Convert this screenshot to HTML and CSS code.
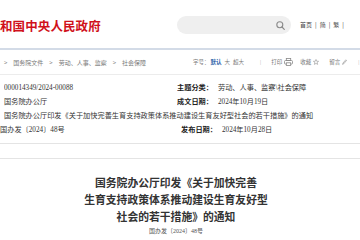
FILE: index.html
```html
<!DOCTYPE html>
<html lang="zh">
<head>
  <meta charset="UTF-8" />
  <meta name="viewport" content="width=device-width, initial-scale=1" />
  <title>国务院办公厅印发《关于加快完善生育支持政策体系推动建设生育友好型社会的若干措施》的通知</title>
  <link rel="stylesheet" href="styles.css">
</head>
<body>
  <header class="top">
    <div class="brand">和国中央人民政府</div>
    <div class="search"><svg class="ico-search" width="9" height="9" viewBox="0 0 9 9"><circle cx="3.8" cy="3.8" r="3" fill="none" stroke="#8a8a8a" stroke-width="1.1"/><path d="M6 6 L8.3 8.3" stroke="#8a8a8a" stroke-width="1.2" stroke-linecap="round"/></svg></div>
    <nav class="lang">首页<span class="sep">|</span>简<span class="sep">|</span>繁<span class="sep">|</span></nav>
  </header>

  <div class="toolbar">
    <div class="crumbs"><span class="arr">&gt;</span>国务院文件<span class="arr">&gt;</span>劳动、人事、监察<span class="arr">&gt;</span>社会保障</div>
    <div class="tools">字号：<b class="on">默认</b><span class="t">大</span><span class="t">超大</span><span class="bar">|</span>打印<svg class="ico" width="9" height="8" viewBox="0 0 9 8"><rect x="2.3" y="0.5" width="4.4" height="2" fill="none" stroke="#888" stroke-width="0.8"/><rect x="0.5" y="2.5" width="8" height="3.6" rx="1" fill="none" stroke="#888" stroke-width="0.8"/><rect x="2.3" y="4.8" width="4.4" height="2.7" fill="#fff" stroke="#888" stroke-width="0.8"/></svg><span class="gap">收藏</span><svg class="ico" width="6" height="6" viewBox="0 0 10 10"><path d="M5 0.8 L6.2 3.7 L9.3 3.9 L6.9 5.9 L7.7 9 L5 7.3 L2.3 9 L3.1 5.9 L0.7 3.9 L3.8 3.7 Z" fill="none" stroke="#888" stroke-width="0.9" stroke-linejoin="round"/></svg><span class="gap wide">留言</span><svg class="ico" width="5" height="6" viewBox="0 0 5 6"><path d="M0.6 5.4 L1 4 L3.8 0.8 L4.5 1.5 L1.7 4.8 Z" fill="none" stroke="#888" stroke-width="0.6"/></svg><span class="bar end">|</span></div>
  </div>

  <div class="info">
    <div class="cell">000014349/2024-00088</div>
    <div class="cell"><b>主题分类：</b><span class="val">劳动、人事、监察\社会保障</span></div>
    <div class="cell">国务院办公厅</div>
    <div class="cell"><b>成文日期：</b><span class="val">2024年10月19日</span></div>
    <div class="cell wide">国务院办公厅印发《关于加快完善生育支持政策体系推动建设生育友好型社会的若干措施》的通知</div>
    <div class="cell">国办发〔2024〕48号</div>
    <div class="cell"><b>发布日期：</b><span class="val">2024年10月28日</span></div>
  </div>

  <div class="divider"></div>

  <article class="doc">
    <h1>国务院办公厅印发《关于加快完善<br>生育支持政策体系推动建设生育友好型<br>社会的若干措施》的通知</h1>
    <p class="docno">国办发〔2024〕48号</p>
  </article>
</body>
</html>
```

FILE: styles.css
```css
:root {
  --red: #d0111b;
  --text: #333333;
  --line: #e4e4e4;
  --blue: #2b5ea7;
}
body {
  margin: 0;
  width: 360px;
  overflow: hidden;
  background: #ffffff;
  color: var(--text);
  font-family: "Liberation Serif", "Noto Sans CJK SC", serif;
}
.top {
  display: grid;
  grid-template-columns: 177px 114px 1fr;
  align-items: center;
  height: 48px;
  border-bottom: 2px solid #d3dbe7;
}
.brand {
  margin-top: 2px;
  color: var(--red);
  font-family: "Noto Sans CJK SC", sans-serif;
  font-weight: 700;
  font-size: 12.5px;
  letter-spacing: 0.1px;
}
.search {
  height: 18px;
  margin-top: 1px;
  border-radius: 9px;
  background: #efefef;
  text-align: right;
  padding-right: 6px;
  box-sizing: border-box;
  line-height: 18px;
}
.ico-search {
  vertical-align: middle;
}
.lang {
  padding-left: 9px;
  margin-top: 1px;
  font-family: "Noto Sans CJK SC", sans-serif;
  font-size: 6px;
  color: #444;
  white-space: nowrap;
}
.lang .sep {
  margin: 0 3px;
}
.toolbar {
  display: grid;
  grid-template-columns: 177px 1fr;
  align-items: center;
  height: 24px;
  border-bottom: 1px solid #ececec;
  font-size: 6px;
  color: #7a7a7a;
}
.crumbs {
  padding-left: 4px;
  white-space: nowrap;
}
.crumbs .arr {
  font-family: "Noto Sans CJK SC", sans-serif;
  margin: 0 6px 0 0;
}
.crumbs .arr ~ .arr {
  margin: 0 6px;
}
.tools {
  padding-left: 16px;
  white-space: nowrap;
  font-size: 5.5px;
}
.tools .on {
  color: var(--blue);
  margin-left: 1px;
}
.tools .t {
  margin-left: 3px;
}
.tools .bar {
  margin: 0 10px 0 16px;
  color: #aaaaaa;
}
.tools .bar.end {
  margin: 0 0 0 11px;
}
.tools .gap {
  margin-left: 7px;
}
.tools .gap.wide {
  margin-left: 10px;
}
.tools .ico {
  margin-left: 2px;
  vertical-align: middle;
}
.info {
  display: grid;
  grid-template-columns: 177px 1fr;
  padding: 6px 0 0 4px;
  font-size: 7.2px;
  line-height: 14px;
}
.cell {
  white-space: nowrap;
  overflow: hidden;
}
.cell:nth-child(even) {
  margin-left: -4px;
}
.cell.wide {
  grid-column: 1 / 3;
  margin-left: 0;
}
.cell b {
  color: #222;
}
.val {
  margin-left: 5px;
}
.divider {
  margin-top: 6px;
  height: 14px;
  border-top: 1px solid var(--line);
  border-bottom: 1px solid var(--line);
}
.doc {
  width: 344px;
  margin-left: 4px;
  text-align: center;
}
.doc h1 {
  margin: 15px 0 0;
  font-family: "Noto Sans CJK SC", serif;
  font-size: 10.8px;
  font-weight: 700;
  line-height: 16.8px;
  color: #333;
}
.doc .docno {
  margin: 2px 0 0;
  font-size: 6px;
  color: #555;
}
```
